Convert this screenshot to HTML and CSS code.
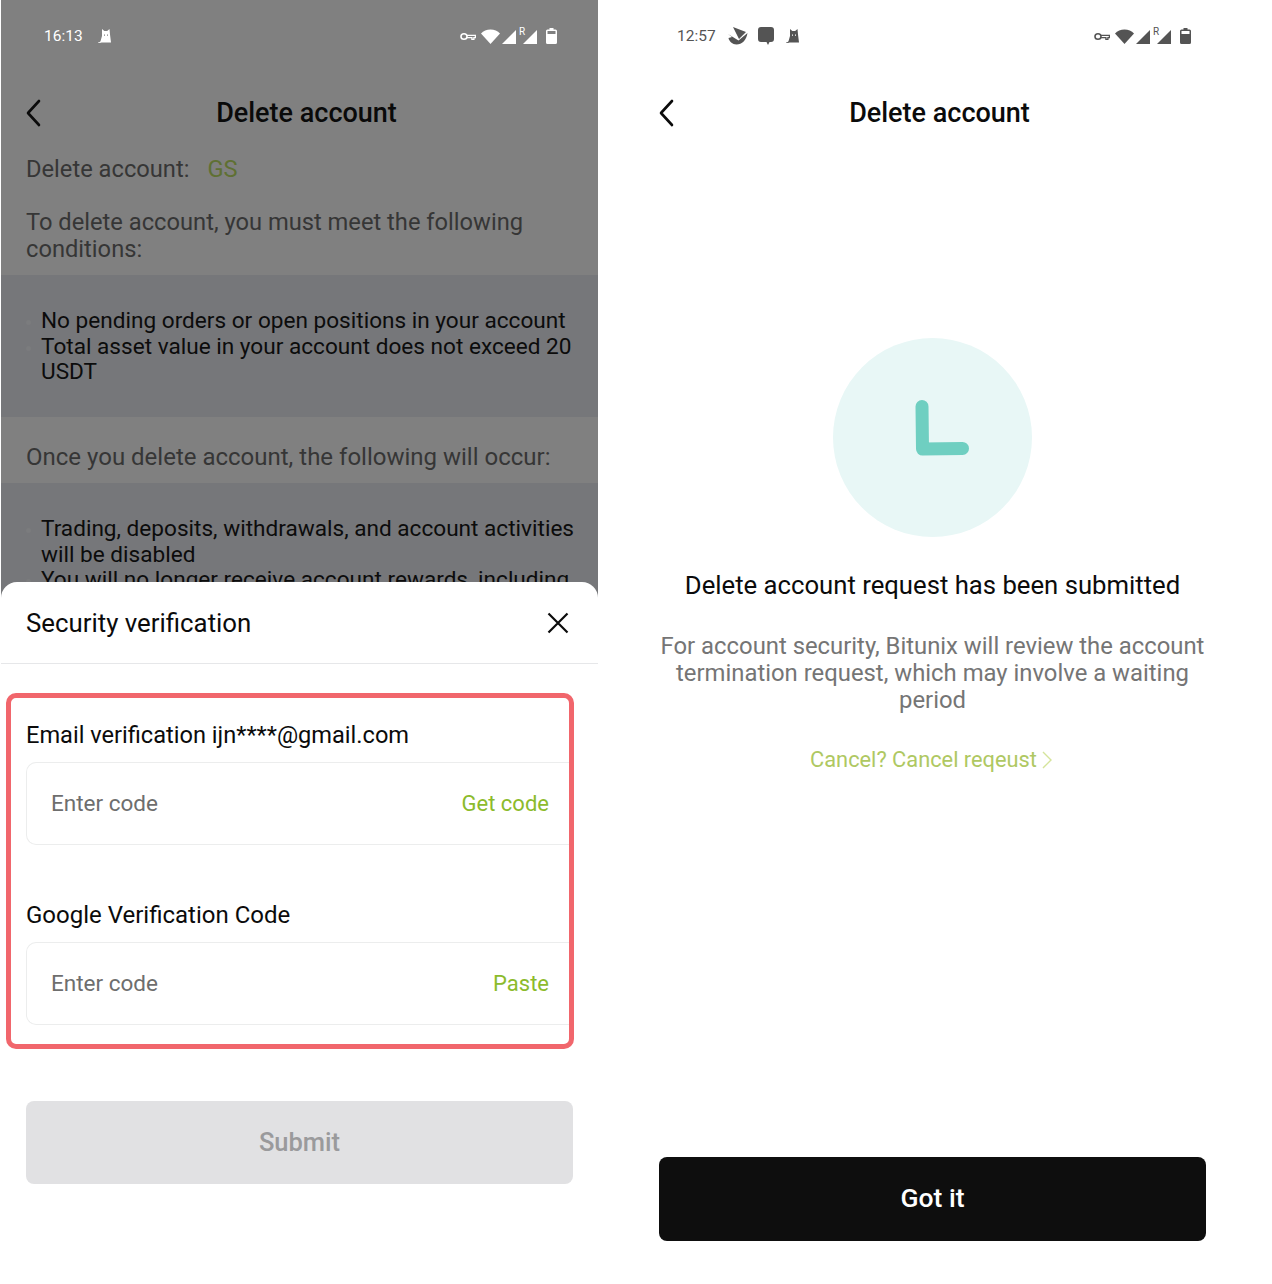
FILE: index.html
```html
<!DOCTYPE html>
<html lang="en">
<head>
  <meta charset="UTF-8">
  <meta name="viewport" content="width=device-width, initial-scale=1.0">
  <title>Delete account</title>
  <link rel="stylesheet" href="styles.css">
</head>
<body>
  <div class="shots">
    <section class="screen screen-left">
      <div class="dimmed">
        <div class="status status-light">
          <div class="status-start">
            <span class="time">16:13</span>
            <svg class="ic-cat" viewBox="0 0 16 16"><path fill="currentColor" fill-rule="evenodd" d="M5 1l2.300 2h2.900L12.500 1l.5 5.500 1 8H4.500c-1.200.7-3 .5-3.500-.5 1 .2 2 0 2.500-.8L5 8zM7 6.500v1.200h1V6.500zM10 6.500v1.200h1V6.500z"/></svg>
          </div>
          <div class="status-end">
            <svg class="ic-key" viewBox="0 0 16 9"><ellipse cx="4" cy="4.500" rx="3" ry="2.800" fill="none" stroke="currentColor" stroke-width="1.600"/><path fill="none" stroke="currentColor" stroke-width="1.300" d="M7 3.400h8.400v2.300h-1.500v1.600h-2V5.700H7"/></svg>
            <svg class="ic-wifi" viewBox="0 0 19 15"><path fill="currentColor" d="M0 4.500C2.400 1.800 5.700.4 9.500.4s7.100 1.400 9.500 4.100L9.500 15z"/></svg>
            <svg class="ic-signal" viewBox="0 0 14 14"><path fill="currentColor" d="M14 0v14H0z"/></svg>
            <span class="roam">R</span>
            <svg class="ic-signal" viewBox="0 0 14 14"><path fill="currentColor" d="M14 0v14H0z"/></svg>
            <svg class="ic-batt" viewBox="0 0 11 16"><path fill="currentColor" fill-rule="evenodd" d="M3.500 0h4v1.500h2A1.500 1.500 0 0 1 11 3v11.500a1.500 1.500 0 0 1-1.500 1.500h-8A1.500 1.500 0 0 1 0 14.500V3a1.500 1.500 0 0 1 1.500-1.500h2zM1.500 3v3h8V3z"/></svg>
          </div>
        </div>
        <header class="nav">
          <svg class="back" viewBox="0 0 16 28"><path d="M14 2 3 14l11 12" fill="none" stroke="currentColor" stroke-width="2.600" stroke-linecap="round" stroke-linejoin="round"/></svg>
          <h1 class="nav-title">Delete account</h1>
        </header>
        <p class="acct-row"><span>Delete account:</span><span class="acct-name">GS</span></p>
        <p class="cond-title">To delete account, you must meet the following conditions:</p>
        <ul class="band band-first">
          <li>No pending orders or open positions in your account</li>
          <li>Total asset value in your account does not exceed 20 USDT</li>
        </ul>
        <p class="occur-title">Once you delete account, the following will occur:</p>
        <ul class="band band-second">
          <li>Trading, deposits, withdrawals, and account activities will be disabled</li>
          <li>You will no longer receive account rewards, including</li>
        </ul>
      </div>

      <div class="sheet">
        <div class="sheet-head">
          <span class="sheet-title">Security verification</span>
          <svg class="close" viewBox="0 0 22 22"><path d="M1.500 1.500l19 19M20.500 1.500l-19 19" fill="none" stroke="currentColor" stroke-width="2.200"/></svg>
        </div>
        <div class="sheet-body">
          <div class="field">
            <label class="field-label field-label-email">Email verification ijn****@gmail.com</label>
            <div class="field-box"><span class="ph">Enter code</span><span class="act">Get code</span></div>
          </div>
          <div class="field">
            <label class="field-label">Google Verification Code</label>
            <div class="field-box"><span class="ph">Enter code</span><span class="act">Paste</span></div>
          </div>
          <div class="marker"></div>
        </div>
        <button class="submit">Submit</button>
      </div>
    </section>

    <section class="screen screen-right">
      <div class="status status-dark">
        <div class="status-start">
          <span class="time">12:57</span>
          <svg class="ic-app" viewBox="0 0 20 18"><path fill="currentColor" d="M5 0l13 5-7 7zM0 7l10.500 6.500L19.500 6C18.500 13 14 17.500 8.500 17.500 4.500 17.500 1 14 .5 11L4 10z"/></svg>
          <svg class="ic-msg" viewBox="0 0 16 18"><path fill="currentColor" d="M3 0h10a3 3 0 0 1 3 3v9a3 3 0 0 1-3 3h-1.500L10 18l-1.500-3H3a3 3 0 0 1-3-3V3a3 3 0 0 1 3-3z"/></svg>
          <svg class="ic-cat" viewBox="0 0 16 16"><path fill="currentColor" fill-rule="evenodd" d="M5 1l2.300 2h2.900L12.500 1l.5 5.500 1 8H4.500c-1.200.7-3 .5-3.500-.5 1 .2 2 0 2.500-.8L5 8zM7 6.500v1.200h1V6.500zM10 6.500v1.200h1V6.500z"/></svg>
        </div>
        <div class="status-end">
          <svg class="ic-key" viewBox="0 0 16 9"><ellipse cx="4" cy="4.500" rx="3" ry="2.800" fill="none" stroke="currentColor" stroke-width="1.600"/><path fill="none" stroke="currentColor" stroke-width="1.300" d="M7 3.400h8.400v2.300h-1.500v1.600h-2V5.700H7"/></svg>
          <svg class="ic-wifi" viewBox="0 0 19 15"><path fill="currentColor" d="M0 4.500C2.400 1.800 5.700.4 9.500.4s7.100 1.400 9.500 4.100L9.500 15z"/></svg>
          <svg class="ic-signal" viewBox="0 0 14 14"><path fill="currentColor" d="M14 0v14H0z"/></svg>
          <span class="roam">R</span>
          <svg class="ic-signal" viewBox="0 0 14 14"><path fill="currentColor" d="M14 0v14H0z"/></svg>
          <svg class="ic-batt" viewBox="0 0 11 16"><path fill="currentColor" fill-rule="evenodd" d="M3.500 0h4v1.500h2A1.500 1.500 0 0 1 11 3v11.500a1.500 1.500 0 0 1-1.500 1.500h-8A1.500 1.500 0 0 1 0 14.500V3a1.500 1.500 0 0 1 1.500-1.500h2zM1.500 3v3h8V3z"/></svg>
        </div>
      </div>
      <header class="nav">
        <svg class="back" viewBox="0 0 16 28"><path d="M14 2 3 14l11 12" fill="none" stroke="currentColor" stroke-width="2.600" stroke-linecap="round" stroke-linejoin="round"/></svg>
        <h1 class="nav-title">Delete account</h1>
      </header>
      <div class="result">
        <svg class="clock" viewBox="0 0 199 199">
          <circle cx="99.500" cy="99.500" r="99.500" fill="#e8f7f6"/>
          <path d="M89 68.500l.5 42.500 40-.5" fill="none" stroke="#6fcfc1" stroke-width="13" stroke-linecap="round" stroke-linejoin="round"/>
        </svg>
        <h2 class="result-title">Delete account request has been submitted</h2>
        <p class="result-text">For account security, Bitunix will review the account termination request, which may involve a waiting period</p>
        <p class="result-link"><span>Cancel? Cancel reqeust</span><svg class="chev" viewBox="0 0 10 18"><path d="M1 1l8 8-8 8" fill="none" stroke="currentColor" stroke-width="1.400"/></svg></p>
      </div>
      <button class="got-it">Got it</button>
    </section>
  </div>
</body>
</html>
```

FILE: styles.css
```css
* { box-sizing: border-box; }
html, body {
  margin: 0;
  padding: 0;
  background: #fff;
}
body {
  font-family: Roboto, sans-serif;
  color: #0b0b0b;
}
p, h1, h2, ul { margin: 0; padding: 0; }

.shots {
  display: flex;
  width: 1272px;
  height: 1284px;
  overflow: hidden;
}
.screen {
  width: 597px;
  height: 1284px;
  position: relative;
}
.screen-left { margin-left: 1px; }
.screen-right { margin-left: 36px; }

/* status bar */
.status {
  height: 72px;
  display: flex;
  justify-content: space-between;
  align-items: center;
}
.status-light { color: #fff; padding: 0 41px 0 43px; }
.status-dark { color: #545454; padding: 0 40px 0 43px; }
.status-start, .status-end {
  display: flex;
  align-items: center;
}
.time { font-size: 15.500px; }
.status-light .time { margin-right: 14px; }
.status-dark .time { margin-right: 12px; }
.ic-cat { width: 16px; height: 16px; }
.ic-app { width: 20px; height: 18px; margin-right: 10px; }
.ic-msg { width: 16px; height: 18px; margin-right: 11px; }
.ic-key { width: 16px; height: 9px; margin-right: 5px; }
.ic-wifi { width: 19px; height: 15px; margin-right: 2px; }
.ic-signal { width: 14px; height: 14px; margin-top: 1px; }
.roam {
  font-size: 10px;
  width: 7px;
  align-self: flex-start;
  margin: -2px -3px 0 3px;
}
.ic-batt { width: 11px; height: 16px; margin-left: 9px; }

/* nav */
.nav {
  height: 80px;
  display: flex;
  align-items: center;
  justify-content: center;
  position: relative;
}
.back {
  width: 16px;
  height: 28px;
  position: absolute;
  left: 24px;
  top: 27px;
  color: #0b0b0b;
}
.nav-title {
  font-size: 27px;
  font-weight: 500;
  margin: 2px 0 0 14px;
}

/* dimmed page behind the sheet */
.dimmed {
  background: #808080;
  height: 700px;
  color: #363636;
}
.dimmed .nav-title { color: #0a0a0a; }
.acct-row {
  font-size: 23.700px;
  line-height: 34px;
  padding: 0 25px;
  display: flex;
  gap: 18px;
}
.acct-name { color: #5f7033; }
.cond-title {
  font-size: 23.700px;
  line-height: 27px;
  padding: 0 25px;
  margin-top: 23px;
  height: 66px;
}
.band {
  background: #76777a;
  list-style: none;
  padding: 0 15px 0 40px;
  color: #0c0c0c;
  font-size: 22.600px;
  line-height: 25.500px;
}
.band li { position: relative; }
.band li::before {
  content: "";
  position: absolute;
  left: -15px;
  top: 12px;
  width: 5px;
  height: 5px;
  border-radius: 50%;
  background: #7b7c7e;
}
.band-first { padding-top: 33px; height: 142px; }
.band-second { padding-top: 33px; height: 120px; }
.occur-title {
  font-size: 24px;
  line-height: 27px;
  height: 66px;
  padding: 27px 25px 0;
}

/* bottom sheet */
.sheet {
  position: absolute;
  left: 0;
  right: 0;
  top: 582px;
  bottom: 0;
  background: #fff;
  border-radius: 16px 16px 0 0;
}
.sheet-head {
  height: 82px;
  padding: 0 29px 0 25px;
  display: flex;
  justify-content: space-between;
  align-items: center;
  border-bottom: 1px solid #e6e7e9;
}
.sheet-title { font-size: 25.800px; }
.close { width: 22px; height: 22px; }
.sheet-body {
  position: relative;
  margin-left: 25px;
  padding-top: 54px;
  width: 543px;
}
.field { height: 180px; }
.field-label {
  display: block;
  font-size: 24px;
  line-height: 34px;
  margin-bottom: 10px;
}
.field-label-email { font-size: 23.600px; }
.field-box {
  height: 83px;
  border: 1px solid #eceded;
  border-right: 0;
  border-radius: 10px 0 0 10px;
  display: flex;
  align-items: center;
  justify-content: space-between;
  padding: 0 20px 0 24px;
}
.ph { color: #6e6e6e; font-size: 22.500px; margin-bottom: 2px; }
.act { color: #8cbb2c; font-size: 22px; }
.marker {
  position: absolute;
  left: -20px;
  top: 29px;
  width: 568px;
  height: 356px;
  border: 5px solid #f1666c;
  border-radius: 10px;
}
.submit {
  display: block;
  margin: 23px 0 0 25px;
  padding-bottom: 3px;
  width: 547px;
  height: 83px;
  border: 0;
  border-radius: 8px;
  background: #e1e1e3;
  color: #9a9a9c;
  font: 500 25.500px Roboto, sans-serif;
}

/* right screen result */
.result {
  display: flex;
  flex-direction: column;
  align-items: center;
  padding-top: 186px;
}
.clock { width: 199px; height: 199px; }
.result-title {
  font-size: 25.700px;
  font-weight: 400;
  line-height: 34px;
  margin-top: 31px;
  color: #0b0b0b;
}
.result-text {
  width: 560px;
  margin-top: 31px;
  text-align: center;
  font-size: 23.850px;
  line-height: 27px;
  color: #757575;
}
.result-link {
  margin: 32px 0 0 -3px;
  display: flex;
  align-items: center;
  gap: 5px;
  font-size: 21.800px;
  line-height: 28px;
  color: #afc862;
}
.chev { width: 10px; height: 18px; color: #d5e49b; }
.got-it {
  position: absolute;
  left: 25px;
  top: 1157px;
  padding-bottom: 4px;
  width: 547px;
  height: 84px;
  border: 0;
  border-radius: 8px;
  background: #0e0e0e;
  color: #fff;
  font: 500 26.500px Roboto, sans-serif;
}
```
